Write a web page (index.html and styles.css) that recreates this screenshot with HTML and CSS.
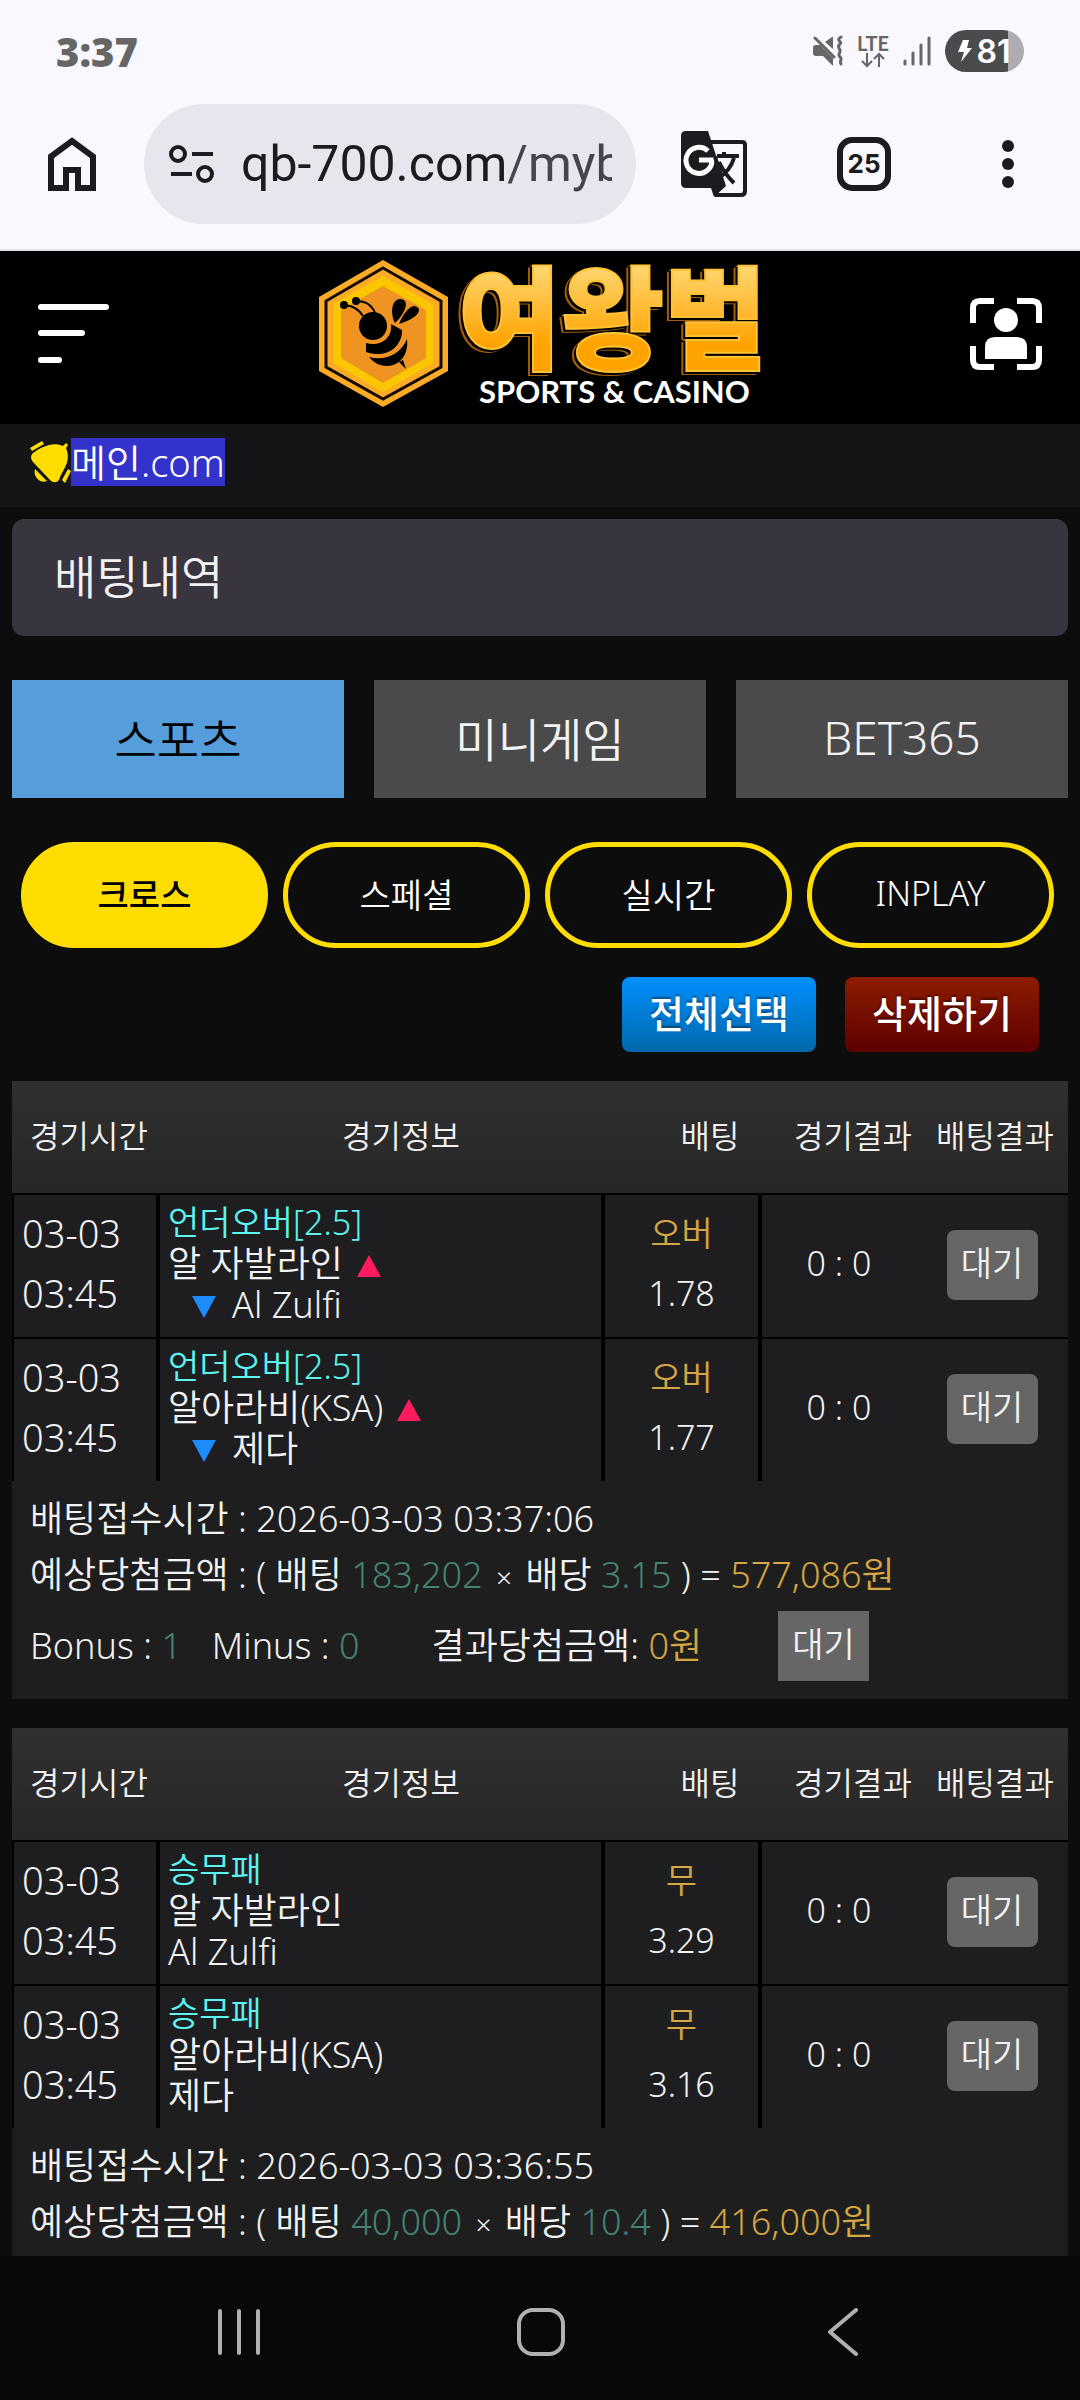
FILE: index.html
```html
<!DOCTYPE html>
<html lang="ko">
<head>
    <meta charset="UTF-8">
    <meta name="viewport" content="width=device-width, initial-scale=1.0">
    <title>배팅내역 - 여왕벌</title>
    <link rel="stylesheet" href="styles.css">
</head>
<body>
    <div class="status-bar">
        <span class="clock">3:37</span>
        <div class="status-icons">
            <svg class="icon-mute" width="30" height="32" viewBox="0 0 30 32" fill="none">
                <path d="M0 13q0-3 3-3h4l13 13v7q0 1-1 0l-9-9H3q-3 0-3-3z" fill="#666"/>
                <path d="M12 7l7-5q1-1 1 1v11z" fill="#666"/>
                <path d="M2 3l19 19M28 2c-6 3 2 5-1 7s-1 4 0 6-3 5 0 7-1 4 1 7" stroke="#666" stroke-width="3" stroke-linecap="round"/>
            </svg>
            <div class="lte">
                <span>LTE</span>
                <svg width="24" height="16" viewBox="0 0 24 16" fill="none" stroke="#666" stroke-width="2">
                    <path d="M6 1v13M1 9l5 5 5-5M18 15V2M13 7l5-5 5 5"/>
                </svg>
            </div>
            <svg class="icon-signal" width="28" height="30" viewBox="0 0 28 30" stroke="#666" stroke-width="3" stroke-linecap="round">
                <path d="M2 25v3M10 17v11M18 9v19M26 2v26"/>
            </svg>
            <div class="battery">
                <svg width="14" height="22" viewBox="0 0 14 22"><path d="M5 0h6L9 8h5L3 22l3-10H0z" fill="#fff"/></svg>
                <span>81</span>
            </div>
        </div>
    </div>

    <div class="browser-bar">
        <button class="icon-btn" aria-label="홈">
            <svg width="48" height="54" viewBox="0 0 48 54" fill="none" stroke="#1b1b20" stroke-width="6">
                <path d="M3 19.500L24 4l21 15.500V51H30V33H18v18H3z"/>
            </svg>
        </button>
        <div class="address">
            <svg width="46" height="38" viewBox="0 0 46 38" fill="none" stroke="#1b1b20" stroke-width="4">
                <circle cx="9" cy="9" r="7"/><circle cx="36" cy="29" r="7"/>
                <path d="M23 9h21M2 29h21"/>
            </svg>
            <div class="url">qb-700.com<span>/myb</span></div>
        </div>
        <div class="browser-actions">
            <button class="icon-btn" aria-label="번역">
                <svg width="66" height="66" viewBox="0 0 66 66" fill="none">
                    <path d="M28 11h33q3 0 3 3v46q0 4-4 4H34" stroke="#1b1b20" stroke-width="4"/>
                    <path d="M5 0h22l18 55-12 11-3-9H5q-5 0-5-5V5q0-5 5-5z" fill="#1b1b20"/>
                    <path d="M36 25h22M43 21v5M53 27c-3 10-9 16-15 20M38 31c4 9 9 15 15 21" stroke="#1b1b20" stroke-width="4"/>
                    <path d="M27 20a13 13 0 1 0 4 9H18" stroke="#fff" stroke-width="5"/>
                    <path d="M34 26l6 18" stroke="#1b1b20" stroke-width="4"/>
                </svg>
            </button>
            <button class="tab-count">25</button>
            <button class="icon-btn" aria-label="메뉴">
                <svg width="12" height="50" viewBox="0 0 12 50" fill="#1b1b20">
                    <circle cx="6" cy="7" r="6"/><circle cx="6" cy="25" r="6"/><circle cx="6" cy="43" r="6"/>
                </svg>
            </button>
        </div>
    </div>

    <header class="header">
        <button class="icon-btn" aria-label="전체메뉴">
            <svg width="72" height="64" viewBox="0 0 72 64" stroke="#fff" stroke-width="6" stroke-linecap="round">
                <path d="M3 5h65M3 31h41M3 58h18"/>
            </svg>
        </button>
        <a href="#" class="logo" aria-label="여왕벌">
            <svg width="442" height="152" viewBox="0 0 442 152">
                <defs>
                    <linearGradient id="gold" x1="0" y1="0" x2="0" y2="1">
                        <stop offset="0.200" stop-color="#ffd875"/>
                        <stop offset="0.700" stop-color="#ffa300"/>
                    </linearGradient>
                </defs>
                <polygon points="64,2 129,39 129,113 64,149 0,113 0,39" fill="#fbab25"/>
                <polygon points="64,10 122,43 122,109 64,141 7,109 7,43" fill="none" stroke="#130b00" stroke-width="3"/>
                <polygon points="64,18 114,46 114,105 64,134 14,105 14,46" fill="#f9c600"/>
                <polygon points="64,28 107,52 107,100 64,125 22,100 22,52" fill="#ef9322"/>
                <circle cx="54" cy="68" r="14"/>
                <circle cx="25" cy="47" r="4"/><circle cx="37" cy="43" r="4"/>
                <path d="M26 47c8 1 14 4 18 11M37 43c9 0 16 4 19 12" fill="none" stroke="#000" stroke-width="2"/>
                <path d="M76 65c-4-7-5-23 5-24 11 0 5 15-5 24zM80 66c3-8 10-18 15-18 10 2 5 12-15 18z"/>
                <path d="M72 66l11 6c1 13-12 30-36 22v-9c13 4 27-4 25-19zM88 81c2 15-7 27-20 27-8 0-14-4-18-9 16 4 31-2 38-18zM80 104l4-2 3 9z"/>
                <text class="logo-name" x="139" y="103">여왕벌</text>
                <text class="logo-sub" x="160" y="145">SPORTS &amp; CASINO</text>
            </svg>
        </a>
        <button class="icon-btn" aria-label="내정보">
            <svg width="72" height="72" viewBox="0 0 72 72" fill="none" stroke="#fff" stroke-width="6">
                <path d="M24 3h-14q-7 0-7 7v15M47 3h15q7 0 7 7v15M3 48v14q0 7 7 7h14M47 69h15q7 0 7-7V48"/>
                <circle cx="36" cy="22" r="12" fill="#fff" stroke="none"/>
                <path d="M15 61V49q0-10 10-10h21q11 0 11 10v12z" fill="#fff" stroke="none"/>
            </svg>
        </button>
    </header>

    <div class="notice">
        <svg width="41" height="42" viewBox="0 0 41 42" fill="#ffdd00">
            <path d="M0 7L12 0l2 3L2 10zM3 12c8-6 20-12 30-7l3-3 2 2-2 3c6 14-4 22-7 32q-3 4-8 1L3 21q-4-5 0-9zM5 28l12 12c-8 3-14-5-12-12zM32 39l6-11 3 2-6 12z"/>
        </svg>
        <span>메인.com</span>
    </div>

    <main class="content">
        <h1 class="page-title">배팅내역</h1>

        <div class="tabs">
            <button class="tab active">스포츠</button>
            <button class="tab">미니게임</button>
            <button class="tab">BET365</button>
        </div>

        <div class="pills">
            <button class="pill active">크로스</button>
            <button class="pill">스페셜</button>
            <button class="pill">실시간</button>
            <button class="pill">INPLAY</button>
        </div>

        <div class="tools">
            <button class="btn btn-blue">전체선택</button>
            <button class="btn btn-red">삭제하기</button>
        </div>

        <section class="slip">
            <table class="bets">
                <thead>
                    <tr><th>경기시간</th><th>경기정보</th><th>배팅</th><th>경기결과</th><th>배팅결과</th></tr>
                </thead>
                <tbody>
                    <tr>
                        <td class="time">03-03<br>03:45</td>
                        <td class="match"><b>언더오버[2.5]</b><br>알 자발라인<i class="up"></i><br><i class="down"></i>Al Zulfi</td>
                        <td class="odds"><b>오버</b><br>1.78</td>
                        <td class="score">0 : 0</td>
                        <td class="state"><span class="badge">대기</span></td>
                    </tr>
                    <tr>
                        <td class="time">03-03<br>03:45</td>
                        <td class="match"><b>언더오버[2.5]</b><br>알아라비(KSA)<i class="up"></i><br><i class="down"></i>제다</td>
                        <td class="odds"><b>오버</b><br>1.77</td>
                        <td class="score">0 : 0</td>
                        <td class="state"><span class="badge">대기</span></td>
                    </tr>
                </tbody>
            </table>
            <div class="summary">
                <p>배팅접수시간 : 2026-03-03 03:37:06</p>
                <p>예상당첨금액 : ( 배팅 <span class="num">183,202</span> <span class="times">×</span> 배당 <span class="num">3.15</span> ) = <span class="money">577,086원</span></p>
                <div class="result">
                    <span class="bonus">Bonus : <span class="num">1</span></span>
                    <span class="minus">Minus : <span class="num">0</span></span>
                    <span class="total">결과당첨금액: <span class="money">0원</span></span>
                    <span class="badge square">대기</span>
                </div>
            </div>
        </section>

        <section class="slip">
            <table class="bets">
                <thead>
                    <tr><th>경기시간</th><th>경기정보</th><th>배팅</th><th>경기결과</th><th>배팅결과</th></tr>
                </thead>
                <tbody>
                    <tr>
                        <td class="time">03-03<br>03:45</td>
                        <td class="match"><b>승무패</b><br>알 자발라인<br>Al Zulfi</td>
                        <td class="odds"><b>무</b><br>3.29</td>
                        <td class="score">0 : 0</td>
                        <td class="state"><span class="badge">대기</span></td>
                    </tr>
                    <tr>
                        <td class="time">03-03<br>03:45</td>
                        <td class="match"><b>승무패</b><br>알아라비(KSA)<br>제다</td>
                        <td class="odds"><b>무</b><br>3.16</td>
                        <td class="score">0 : 0</td>
                        <td class="state"><span class="badge">대기</span></td>
                    </tr>
                </tbody>
            </table>
            <div class="summary">
                <p>배팅접수시간 : 2026-03-03 03:36:55</p>
                <p>예상당첨금액 : ( 배팅 <span class="num">40,000</span> <span class="times">×</span> 배당 <span class="num">10.4</span> ) = <span class="money">416,000원</span></p>
            </div>
        </section>
    </main>

    <nav class="system-nav">
        <button class="icon-btn" aria-label="최근 앱">
            <svg width="44" height="48" viewBox="0 0 44 48" stroke="#b0b0b0" stroke-width="4" stroke-linecap="round"><path d="M3 3v42M22 3v42M41 3v42"/></svg>
        </button>
        <button class="icon-btn" aria-label="홈 화면">
            <svg width="48" height="48" viewBox="0 0 48 48" fill="none" stroke="#b0b0b0" stroke-width="4"><rect x="2" y="2" width="44" height="44" rx="14"/></svg>
        </button>
        <button class="icon-btn" aria-label="뒤로">
            <svg width="30" height="48" viewBox="0 0 30 48" fill="none" stroke="#b0b0b0" stroke-width="4" stroke-linecap="round" stroke-linejoin="round"><path d="M28 2L2 24l26 22"/></svg>
        </button>
    </nav>
</body>
</html>
```
FILE: styles.css
```css
* {
    box-sizing: border-box;
}
body {
    display: flex;
    flex-direction: column;
    height: 100vh;
    margin: 0;
    background: #0d0d0d;
    color: #f2f2f2;
    font-family: "Noto Sans", "Noto Sans CJK KR", sans-serif;
    font-weight: 350;
    font-size: 34px;
}
button {
    padding: 0;
    border: none;
    background: none;
    color: inherit;
    font: inherit;
    cursor: pointer;
}
svg {
    display: block;
}
h1, p {
    margin: 0;
    font-weight: 350;
}

/* phone status bar */
.status-bar {
    display: flex;
    flex: none;
    align-items: center;
    justify-content: space-between;
    height: 102px;
    padding: 0 56px;
    background: #f9f8ff;
    color: #666;
}
.clock {
    font-family: "Open Sans", sans-serif;
    font-size: 40px;
    font-weight: 800;
}
.status-icons {
    display: flex;
    align-items: center;
    gap: 14px;
}
.lte {
    display: flex;
    flex-direction: column;
    align-items: center;
    font-family: Lato, sans-serif;
    font-size: 20px;
    font-weight: 700;
    line-height: 18px;
}
.battery {
    display: flex;
    align-items: center;
    justify-content: center;
    gap: 4px;
    width: 79px;
    height: 42px;
    border-radius: 21px;
    background: linear-gradient(90deg, #4b4b4d 80%, #aeabb2 80%);
    color: #fff;
    font-family: Inter, sans-serif;
    font-size: 32px;
    font-weight: 600;
}

/* browser toolbar */
.browser-bar {
    display: flex;
    flex: none;
    align-items: center;
    height: 149px;
    padding: 0 66px 24px 48px;
    background: #f9f8ff;
    border-bottom: 2px solid #e3e2e8;
    color: #1b1b20;
}
.address {
    display: flex;
    flex: 1;
    align-items: center;
    gap: 26px;
    min-width: 0;
    height: 120px;
    margin: 0 45px 0 48px;
    padding: 0 24px 0 25px;
    border-radius: 60px;
    background: #e7e6ef;
}
.url {
    flex: 1;
    overflow: hidden;
    font-family: Roboto, sans-serif;
    font-size: 50px;
    font-weight: 450;
    white-space: nowrap;
}
.url span {
    color: #43464f;
}
.browser-actions {
    display: flex;
    align-items: center;
}
.tab-count {
    width: 54px;
    height: 54px;
    margin: 0 111px 0 90px;
    border: 6px solid #1b1b20;
    border-radius: 15px;
    font-family: Inter, sans-serif;
    font-size: 26px;
    font-weight: 700;
}

/* site header */
.header {
    display: flex;
    flex: none;
    align-items: center;
    justify-content: space-between;
    height: 173px;
    padding: 0 38px 8px;
    background: #000;
}
.logo-name {
    fill: url(#gold);
    stroke: #ffc234;
    stroke-width: 2px;
    font-family: "Noto Sans CJK KR", sans-serif;
    font-size: 112px;
    font-weight: 900;
    filter: drop-shadow(-2px 2px 0 #000) drop-shadow(-2px 1px 0 #a35c0a);
}
.logo-sub {
    fill: #fff;
    font-family: Lato, sans-serif;
    font-size: 31px;
    font-weight: 700;
}
.notice {
    display: flex;
    flex: none;
    align-items: center;
    height: 83px;
    padding: 0 30px 8px;
    background: #151517;
}
.notice span {
    background: #3333cc;
    color: #fff;
    font-size: 38px;
    line-height: 48px;
}

/* page */
.content {
    flex: 1;
    min-height: 0;
    overflow: hidden;
    padding: 12px 12px 0;
}
.page-title {
    height: 117px;
    padding: 0 42px;
    border-radius: 12px;
    background: #38353f;
    font-size: 46px;
    line-height: 115px;
}
.tabs {
    display: flex;
    gap: 30px;
    margin-top: 44px;
}
.tab {
    flex: 1;
    height: 118px;
    padding-bottom: 4px;
    background: #4a4a4a;
    font-size: 46px;
}
.tab.active {
    background: #559ddb;
    color: #000;
}
.pills {
    display: flex;
    gap: 15px;
    margin-top: 44px;
    padding: 0 14px 0 9px;
}
.pill {
    flex: 1;
    height: 106px;
    padding-bottom: 4px;
    border: 5px solid #ffdd00;
    border-radius: 53px;
    color: #fff;
    font-size: 34px;
}
.pill.active {
    background: #ffdd00;
    color: #000;
    font-weight: 500;
}
.tools {
    display: flex;
    justify-content: flex-end;
    gap: 29px;
    margin-top: 29px;
    padding-right: 29px;
}
.btn {
    width: 194px;
    height: 75px;
    padding-bottom: 4px;
    border-radius: 8px;
    color: #fff;
    font-size: 38px;
    font-weight: 500;
    line-height: 66px;
    text-shadow: 0 -2px 2px rgba(0, 0, 0, 0.4);
}
.btn-blue {
    background: linear-gradient(#0090ff, #0068aa);
}
.btn-red {
    background: linear-gradient(#8e1c00, #5c0000);
}

/* bet slips */
.slip {
    margin-top: 29px;
    background: #1e1e1e;
}
.bets, .bets thead, .bets tbody {
    display: block;
}
.bets tr {
    display: grid;
    border-bottom: 2px solid #000;
}
.bets thead tr {
    grid-template-columns: 154px 1fr 148px 138px 146px;
    height: 114px;
    background: linear-gradient(#303030, #272727);
}
.bets tbody tr {
    grid-template-columns: 148px 1fr 157px 154px 152px;
    height: 144px;
    background: #1e1e20;
}
.bets tbody tr:last-child {
    height: 142px;
    border-bottom: none;
}
.bets th {
    padding: 0;
    font-size: 32px;
    font-weight: 350;
    line-height: 110px;
}
.bets td {
    display: flex;
    flex-direction: column;
    justify-content: center;
    padding: 0 0 6px;
    border: 0 solid #000;
}
.bets td, .badge {
    text-align: center;
}
.bets .time {
    display: block;
    padding: 8px 0 0 8px;
    border-width: 0 4px 0 2px;
    font-size: 38px;
    line-height: 60px;
    text-align: left;
}
.bets .match {
    display: block;
    padding: 6px 0 0 8px;
    border-right-width: 4px;
    font-size: 36px;
    line-height: 41px;
    text-align: left;
}
.bets .odds {
    display: block;
    padding-top: 8px;
    border-right-width: 4px;
    line-height: 60px;
}
.bets b {
    font-size: 34px;
    font-weight: 350;
}
.match b {
    color: #5cf5f0;
}
.odds b {
    color: #d5a641;
}
.bets .state {
    align-items: center;
    padding-bottom: 2px;
}
.badge {
    width: 91px;
    height: 70px;
    border-radius: 8px;
    background: #666;
    font-size: 34px;
    line-height: 66px;
}
.badge.square {
    margin-left: 76px;
    border-radius: 0;
}
.up, .down {
    display: inline-block;
    border: 0 solid transparent;
    border-width: 0 12px;
}
.up {
    margin-left: 14px;
    border-bottom: 22px solid #ff1b5e;
}
.down {
    margin: 0 16px 0 24px;
    border-top: 22px solid #1c8cff;
}
.summary {
    padding: 10px 18px;
    font-size: 36px;
    line-height: 56px;
    white-space: nowrap;
}
.summary p {
    height: 56px;
}
.num {
    color: #468272;
}
.money {
    color: #d5a641;
}
.times {
    margin: 0 4px;
    font-size: 28px;
    line-height: 28px;
}
.result {
    display: flex;
    align-items: center;
    height: 86px;
}
.minus {
    margin-left: 30px;
}
.total {
    margin-left: 72px;
}

/* system navigation */
.system-nav {
    display: flex;
    flex: none;
    height: 144px;
    padding: 8px 86px 0 88px;
    background: #080808;
}
.system-nav button {
    display: flex;
    flex: 1;
    align-items: center;
    justify-content: center;
}
```
